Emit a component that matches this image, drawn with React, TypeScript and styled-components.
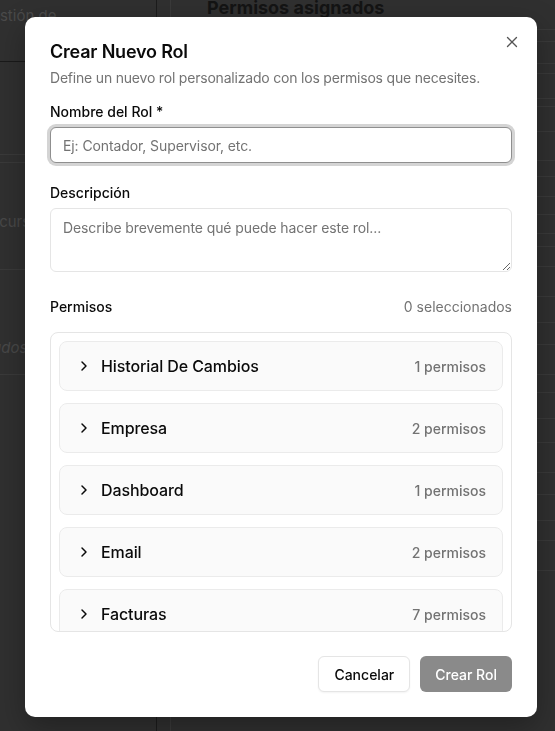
import styled, { createGlobalStyle } from "styled-components";
import { FC } from "react";
import { X, ChevronRight } from "lucide-react";

const GlobalStyle = createGlobalStyle`
  * { box-sizing: border-box; }
  body {
    margin: 0;
    font-family: Inter, "Noto Sans", sans-serif;
    background: #303030;
    overflow: hidden;
  }
`;

interface PermissionGroup {
  name: string;
  count: number;
}

const groups: PermissionGroup[] = [
  { name: "Historial De Cambios", count: 1 },
  { name: "Empresa", count: 2 },
  { name: "Dashboard", count: 1 },
  { name: "Email", count: 2 },
  { name: "Facturas", count: 7 },
  { name: "Clientes", count: 4 },
  { name: "Productos", count: 4 },
  { name: "Usuarios", count: 3 },
];

const backgroundRows = [10, 12, 22, 10, 25, 8, 25, 29, 16, 20, 18, 19, 13, 20, 30, 26, 22, 30, 18, 26, 24, 30, 22, 26, 20, 30];

const App: FC = () => {
  return (
    <>
      <GlobalStyle />
      <Page>
        <Sidebar>
          <SidebarHeader>Gestión de</SidebarHeader>
          <SidebarGap />
          <SidebarRow $height={8} />
          <SidebarRow $height={107} $shift={50} $offset={19}>
            Recursos
          </SidebarRow>
          <SidebarRow $height={105} $shift={69} $offset={27} $italic>
            Usados
          </SidebarRow>
        </Sidebar>
        <Divider />
        <Main>
          <MainTitle>Permisos asignados</MainTitle>
          {backgroundRows.map((h, i) => (
            <MainRow key={i} $height={h} />
          ))}
        </Main>
      </Page>

      <Modal role="dialog">
        <CloseButton aria-label="Cerrar">
          <X size={18} strokeWidth={1.8} />
        </CloseButton>
        <Title>Crear Nuevo Rol</Title>
        <Description>Define un nuevo rol personalizado con los permisos que necesites.</Description>

        <Label $top={17}>Nombre del Rol *</Label>
        <NameInput placeholder="Ej: Contador, Supervisor, etc." />

        <Label $top={23}>Descripción</Label>
        <DescriptionArea placeholder="Describe brevemente qué puede hacer este rol..." />

        <PermHeader>
          <span>Permisos</span>
          <Selected>0 seleccionados</Selected>
        </PermHeader>

        <PermList>
          {groups.map((g) => (
            <PermItem key={g.name}>
              <ChevronRight size={16} strokeWidth={2.2} />
              <PermName>{g.name}</PermName>
              <PermCount>{g.count} permisos</PermCount>
            </PermItem>
          ))}
        </PermList>

        <Footer>
          <OutlineButton>Cancelar</OutlineButton>
          <PrimaryButton disabled>Crear Rol</PrimaryButton>
        </Footer>
      </Modal>
    </>
  );
};

const Page = styled.div`
  display: flex;
  height: 100vh;
  overflow: hidden;
  background: #303030;
`;

const Sidebar = styled.div`
  width: 157px;
  flex-shrink: 0;
  border-right: 1px solid #1c1c1c;
  overflow: hidden;
`;

const SidebarHeader = styled.div`
  height: 62px;
  margin-left: -20px;
  padding-top: 6px;
  font-size: 15px;
  color: #4a4a4a;
  border-bottom: 1px solid #1a1a1a;
`;

const SidebarGap = styled.div`
  height: 93px;
  border-bottom: 1px solid #3a3a3a;
`;

const SidebarRow = styled.div<{ $height: number; $shift?: number; $offset?: number; $italic?: boolean }>`
  height: ${(p) => p.$height}px;
  margin-left: -${(p) => p.$offset ?? 0}px;
  padding-top: ${(p) => p.$shift ?? 0}px;
  font-size: 15px;
  line-height: 18px;
  font-style: ${(p) => (p.$italic ? "italic" : "normal")};
  color: #484848;
  border-bottom: 1px solid #3a3a3a;
`;

const Divider = styled.div`
  width: 14px;
  flex-shrink: 0;
  border-right: 1px solid #3a3a3a;
`;

const Main = styled.div`
  flex: 1;
  padding-left: 36px;
`;

const MainTitle = styled.div`
  margin-top: -4px;
  font-size: 18px;
  font-weight: 700;
  color: #141414;
  line-height: 24px;
`;

const MainRow = styled.div<{ $height: number }>`
  height: ${(p) => p.$height}px;
  border-bottom: 1px solid #3a3a3a;
`;

const Modal = styled.div`
  position: fixed;
  top: 17px;
  left: 25px;
  width: 512px;
  display: flex;
  flex-direction: column;
  padding: 26px 25px 25px;
  background: #ffffff;
  border-radius: 10px;
  box-shadow: 0 10px 30px rgba(0, 0, 0, 0.3);
  color: #0a0a0a;
`;

const CloseButton = styled.button`
  position: absolute;
  top: 16px;
  right: 16px;
  display: flex;
  padding: 0;
  border: none;
  background: transparent;
  color: #555555;
  cursor: pointer;
`;

const Title = styled.h2`
  margin: 0;
  font-size: 18px;
  font-weight: 600;
  line-height: 18px;
  letter-spacing: -0.2px;
`;

const Description = styled.p`
  margin: 7px 0 0;
  font-size: 14px;
  line-height: 20px;
  letter-spacing: -0.2px;
  color: #737373;
`;

const Label = styled.label<{ $top: number }>`
  display: block;
  margin-top: ${(p) => p.$top}px;
  margin-bottom: 8px;
  font-size: 14px;
  font-weight: 500;
  line-height: 14px;
`;

const fieldBase = `
  width: 100%;
  font-family: Inter, "Noto Sans", sans-serif;
  font-size: 14px;
  letter-spacing: -0.1px;
  color: #0a0a0a;
  background: #ffffff;
  border-radius: 6px;
  outline: none;
  &::placeholder { color: #737373; }
`;

const NameInput = styled.input`
  ${fieldBase}
  height: 36px;
  padding: 0 12px;
  border: 1px solid #8f8f8f;
  box-shadow: 0 0 0 3px #d4d4d4;
`;

const DescriptionArea = styled.textarea`
  ${fieldBase}
  height: 64px;
  padding: 9px 12px;
  line-height: 20px;
  border: 1px solid #e5e5e5;
  resize: vertical;
`;

const PermHeader = styled.div`
  display: flex;
  justify-content: space-between;
  align-items: center;
  margin-top: 25px;
  font-size: 14px;
  font-weight: 500;
  line-height: 20px;
`;

const Selected = styled.span`
  font-weight: 400;
  color: #737373;
`;

const PermList = styled.div`
  display: flex;
  flex-direction: column;
  gap: 12px;
  height: 300px;
  margin-top: 15px;
  padding: 8px;
  border: 1px solid #e5e5e5;
  border-radius: 8px;
  overflow-y: auto;
  scrollbar-width: none;
  &::-webkit-scrollbar { display: none; }
`;

const PermItem = styled.div`
  display: flex;
  align-items: center;
  gap: 9px;
  flex-shrink: 0;
  height: 50px;
  padding: 0 16px;
  background: #fafafa;
  border: 1px solid #ebebeb;
  border-radius: 8px;
  color: #0a0a0a;
`;

const PermName = styled.span`
  flex: 1;
  font-size: 16px;
  font-weight: 500;
  letter-spacing: -0.1px;
`;

const PermCount = styled.span`
  font-size: 14px;
  font-weight: 500;
  color: #737373;
`;

const Footer = styled.div`
  display: flex;
  justify-content: flex-end;
  gap: 10px;
  margin-top: 24px;
`;

const buttonBase = `
  height: 36px;
  padding: 0 15px;
  border-radius: 6px;
  font-family: Inter, "Noto Sans", sans-serif;
  font-size: 14px;
  font-weight: 500;
  white-space: nowrap;
`;

const OutlineButton = styled.button`
  ${buttonBase}
  background: #ffffff;
  color: #0a0a0a;
  border: 1px solid #e5e5e5;
  box-shadow: 0 1px 2px rgba(0, 0, 0, 0.05);
`;

const PrimaryButton = styled.button`
  ${buttonBase}
  background: #8a8a8a;
  color: #ffffff;
  border: none;
`;

export default App;
